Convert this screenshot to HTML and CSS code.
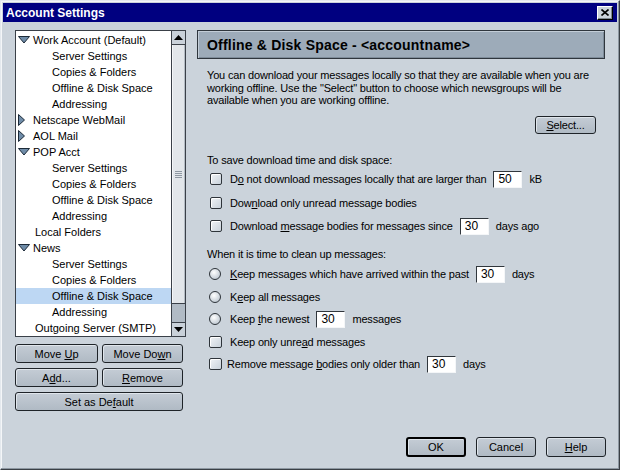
FILE: index.html
```html
<!DOCTYPE html>
<html>
<head>
<meta charset="utf-8">
<title>Account Settings</title>
<link rel="stylesheet" href="styles.css">
</head>
<body>
<div class="window">
  <div class="titlebar">
    <span class="title">Account Settings</span>
    <span class="close"><svg width="8" height="7" viewBox="0 0 8 7"><path d="M0.5 0.5 L7.5 6.5 M7.5 0.5 L0.5 6.5" stroke="#000" stroke-width="1.6" fill="none"/></svg></span>
  </div>

  <div class="content">
    <div class="left">
      <div class="tree">
        <ul class="rows">
          <li class="row parent"><svg class="tw" width="12" height="8" viewBox="0 0 12 8"><polygon points="0.5,0.5 11.5,0.5 6,7" fill="#6f8ca8" stroke="#1c2a38"/></svg><span>Work Account (Default)</span></li>
          <li class="row child">Server Settings</li>
          <li class="row child">Copies &amp; Folders</li>
          <li class="row child">Offline &amp; Disk Space</li>
          <li class="row child">Addressing</li>
          <li class="row parent"><svg class="tw" width="12" height="12" viewBox="0 0 12 12"><polygon points="0.5,0.5 6.5,6 0.5,11.5" fill="#6f8ca8" stroke="#1c2a38"/></svg><span>Netscape WebMail</span></li>
          <li class="row parent"><svg class="tw" width="12" height="12" viewBox="0 0 12 12"><polygon points="0.5,0.5 6.5,6 0.5,11.5" fill="#6f8ca8" stroke="#1c2a38"/></svg><span>AOL Mail</span></li>
          <li class="row parent"><svg class="tw" width="12" height="8" viewBox="0 0 12 8"><polygon points="0.5,0.5 11.5,0.5 6,7" fill="#6f8ca8" stroke="#1c2a38"/></svg><span>POP Acct</span></li>
          <li class="row child">Server Settings</li>
          <li class="row child">Copies &amp; Folders</li>
          <li class="row child">Offline &amp; Disk Space</li>
          <li class="row child">Addressing</li>
          <li class="row leaf">Local Folders</li>
          <li class="row parent"><svg class="tw" width="12" height="8" viewBox="0 0 12 8"><polygon points="0.5,0.5 11.5,0.5 6,7" fill="#6f8ca8" stroke="#1c2a38"/></svg><span>News</span></li>
          <li class="row child">Server Settings</li>
          <li class="row child">Copies &amp; Folders</li>
          <li class="row child sel">Offline &amp; Disk Space</li>
          <li class="row child">Addressing</li>
          <li class="row leaf">Outgoing Server (SMTP)</li>
        </ul>
        <div class="scrollbar">
          <div class="sb-btn sb-up"><svg width="9" height="5" viewBox="0 0 9 5"><polygon points="0,5 9,5 4.5,0" fill="#000"/></svg></div>
          <div class="sb-thumb"><span class="grip"></span></div>
          <div class="sb-track"></div>
          <div class="sb-btn sb-down"><svg width="9" height="5" viewBox="0 0 9 5"><polygon points="0,0 9,0 4.5,5" fill="#000"/></svg></div>
        </div>
      </div>
      <div class="btn-grid">
        <div class="btn"><span>Move <u>U</u>p</span></div>
        <div class="btn"><span>Move Do<u>w</u>n</span></div>
        <div class="btn"><span>A<u>d</u>d...</span></div>
        <div class="btn"><span><u>R</u>emove</span></div>
        <div class="btn wide"><span>Set as De<u>f</u>ault</span></div>
      </div>
    </div>

    <div class="right">
      <div class="header">Offline &amp; Disk Space - &lt;accountname&gt;</div>
      <p class="intro">You can download your messages locally so that they are available when you are<br>working offline. Use the &quot;Select&quot; button to choose which newsgroups will be<br>available when you are working offline.</p>
      <div class="select-row"><div class="btn select"><span><u>S</u>elect...</span></div></div>

      <div class="group-label">To save download time and disk space:</div>
      <div class="opt opt1"><span class="check"></span><span>D<u>o</u> not download messages locally that are larger than</span><span class="field">50</span><span>kB</span></div>
      <div class="opt opt1"><span class="check"></span><span>Dow<u>n</u>load only unread message bodies</span></div>
      <div class="opt opt1"><span class="check"></span><span>Download <u>m</u>essage bodies for messages since</span><span class="field">30</span><span>days ago</span></div>

      <div class="group-label second">When it is time to clean up messages:</div>
      <div class="opt opt2"><span class="radio"></span><span><u>K</u>eep messages which have arrived within the past</span><span class="field">30</span><span>days</span></div>
      <div class="opt opt2"><span class="radio"></span><span>K<u>e</u>ep all messages</span></div>
      <div class="opt opt2"><span class="radio"></span><span>Keep <u>t</u>he newest</span><span class="field">30</span><span>messages</span></div>
      <div class="opt opt2"><span class="check alt"></span><span>Keep only unre<u>a</u>d messages</span></div>
      <div class="opt opt2"><span class="check alt tight"></span><span>Remove message <u>b</u>odies only older than</span><span class="field">30</span><span>days</span></div>
    </div>
  </div>

  <div class="footer">
    <div class="btn fbtn default"><span>OK</span></div>
    <div class="btn fbtn"><span>Cancel</span></div>
    <div class="btn fbtn"><span><u>H</u>elp</span></div>
  </div>
</div>
</body>
</html>
```

FILE: styles.css
```css
html, body {
  margin: 0;
  padding: 0;
}

body {
  font-family: "Liberation Sans", Arial, sans-serif;
  font-size: 11px;
  color: #000;
  background: #cbd3db;
}

u {
  text-decoration: underline;
  text-underline-offset: 1px;
}

.window {
  width: 620px;
  height: 470px;
  box-sizing: border-box;
  background: #cbd3db;
  border: 1px solid;
  border-color: #e4e9ee #3a3f45 #3a3f45 #e4e9ee;
  box-shadow: inset -1px -1px 0 #8d97a1, inset 1px 1px 0 #f4f6f8;
  padding: 2px;
  display: flex;
  flex-direction: column;
}

/* title bar */
.titlebar {
  height: 19px;
  flex: none;
  background: #000080;
  color: #fff;
  display: flex;
  align-items: center;
  justify-content: space-between;
  padding: 0 4px 0 3px;
}

.title {
  font-weight: bold;
  font-size: 12px;
}

.close {
  width: 16px;
  height: 14px;
  box-sizing: border-box;
  background: #cbd3db;
  border: 1px solid;
  border-color: #ffffff #000000 #000000 #ffffff;
  box-shadow: inset -1px -1px 0 #7f8891;
  display: flex;
  align-items: center;
  justify-content: center;
}

/* content */
.content {
  display: flex;
  gap: 11px;
  padding: 8px 0 0 12px;
}

.left {
  width: 171px;
  flex: none;
}

.tree {
  height: 307px;
  box-sizing: border-box;
  border: 1px solid #3a4048;
  background: #fff;
  display: flex;
}

.rows {
  flex: 1;
  list-style: none;
  margin: 0;
  padding: 1px 0 0;
}

.row {
  height: 16px;
  display: flex;
  align-items: center;
  white-space: nowrap;
}

.row.parent {
  padding-left: 2px;
}

.row.parent .tw {
  flex: none;
  margin-right: 3px;
}

.row.leaf {
  padding-left: 19px;
}

.row.child {
  padding-left: 36px;
}

.row.sel {
  background: #bdd7f3;
}

.scrollbar {
  width: 13px;
  flex: none;
  border-left: 1px solid #3a4048;
  display: flex;
  flex-direction: column;
  background: #dfe4e8;
}

.sb-btn {
  height: 13px;
  flex: none;
  background: #c9d1d9;
  display: flex;
  align-items: center;
  justify-content: center;
}

.sb-up {
  border-bottom: 1px solid #3a4048;
}

.sb-down {
  border-top: 1px solid #3a4048;
}

.sb-thumb {
  height: 258px;
  flex: none;
  background: #e2e6ea;
  border-bottom: 1px solid #3a4048;
  box-shadow: inset 1px 0 0 #f4f6f8, inset -1px 0 0 #b4bcc4;
  display: flex;
  align-items: center;
  justify-content: center;
}

.grip {
  width: 7px;
  height: 7px;
  background: repeating-linear-gradient(#8e98a2 0 1px, transparent 1px 2px);
}

.sb-track {
  flex: 1;
  background: #b1bbc5;
}

/* buttons */
.btn {
  box-sizing: border-box;
  height: 19px;
  border: 1px solid #1e2328;
  border-radius: 3px;
  background: linear-gradient(#c4ccd5, #b0bac4);
  box-shadow: inset 1px 1px 0 #dfe5eb;
  display: flex;
  align-items: center;
  justify-content: center;
  white-space: nowrap;
}

.btn-grid {
  margin-top: 7px;
  width: 168px;
  display: grid;
  grid-template-columns: 83px 81px;
  column-gap: 4px;
  row-gap: 5px;
}

.btn-grid .wide {
  grid-column: 1 / 3;
}

/* right panel */
.right {
  width: 408px;
  flex: none;
  letter-spacing: -0.17px;
}

.header {
  height: 29px;
  box-sizing: border-box;
  border: 1px solid #2f363d;
  background: #9dabb9;
  box-shadow: inset 1px 1px 0 #c3cdd7, inset -1px -1px 0 #7e8c9a;
  font-weight: bold;
  font-size: 14px;
  letter-spacing: 0.2px;
  padding-left: 9px;
  display: flex;
  align-items: center;
  white-space: nowrap;
}

.intro {
  margin: 10px 0 0 10px;
  line-height: 12.5px;
  white-space: nowrap;
}

.select-row {
  display: flex;
  justify-content: flex-end;
  margin-top: 9px;
  padding-right: 9px;
}

.btn.select {
  width: 61px;
  height: 18px;
}

.group-label {
  margin: 20px 0 1px 10px;
  line-height: 13px;
}

.group-label.second {
  margin-top: 10px;
  margin-bottom: 2px;
}

.opt {
  display: flex;
  align-items: center;
  white-space: nowrap;
  padding-left: 13px;
}

.opt1 {
  height: 23.5px;
}

.opt2 {
  height: 22.5px;
  padding-left: 12px;
}

.check {
  width: 12px;
  height: 12px;
  box-sizing: border-box;
  flex: none;
  border: 1px solid #2e343a;
  border-radius: 2px;
  background: linear-gradient(135deg, #f0f3f6, #c9d2db);
  box-shadow: inset 1px 1px 0 #ffffff;
  margin-right: 8px;
}

.check.alt {
  width: 13px;
  margin-right: 8px;
}

.check.alt.tight {
  margin-right: 5px;
}

.radio {
  width: 12px;
  height: 12px;
  box-sizing: border-box;
  flex: none;
  border: 1px solid #2e343a;
  border-radius: 50%;
  background: radial-gradient(circle at 40% 35%, #ffffff, #c3ccd5 75%);
  margin-right: 9px;
}

.field {
  width: 29px;
  height: 17px;
  box-sizing: border-box;
  flex: none;
  background: #fff;
  border: 1px solid;
  border-color: #30363c #f4f6f8 #f4f6f8 #30363c;
  padding-left: 4px;
  margin: 0 7px;
  font-size: 12px;
  line-height: 15px;
  letter-spacing: 0;
}

/* footer */
.footer {
  margin-top: auto;
  display: flex;
  justify-content: flex-end;
  gap: 10px;
  padding: 0 11px 10px 0;
}

.btn.fbtn {
  width: 60px;
  height: 20px;
}

.btn.default {
  border: 2px solid #000;
}
```
